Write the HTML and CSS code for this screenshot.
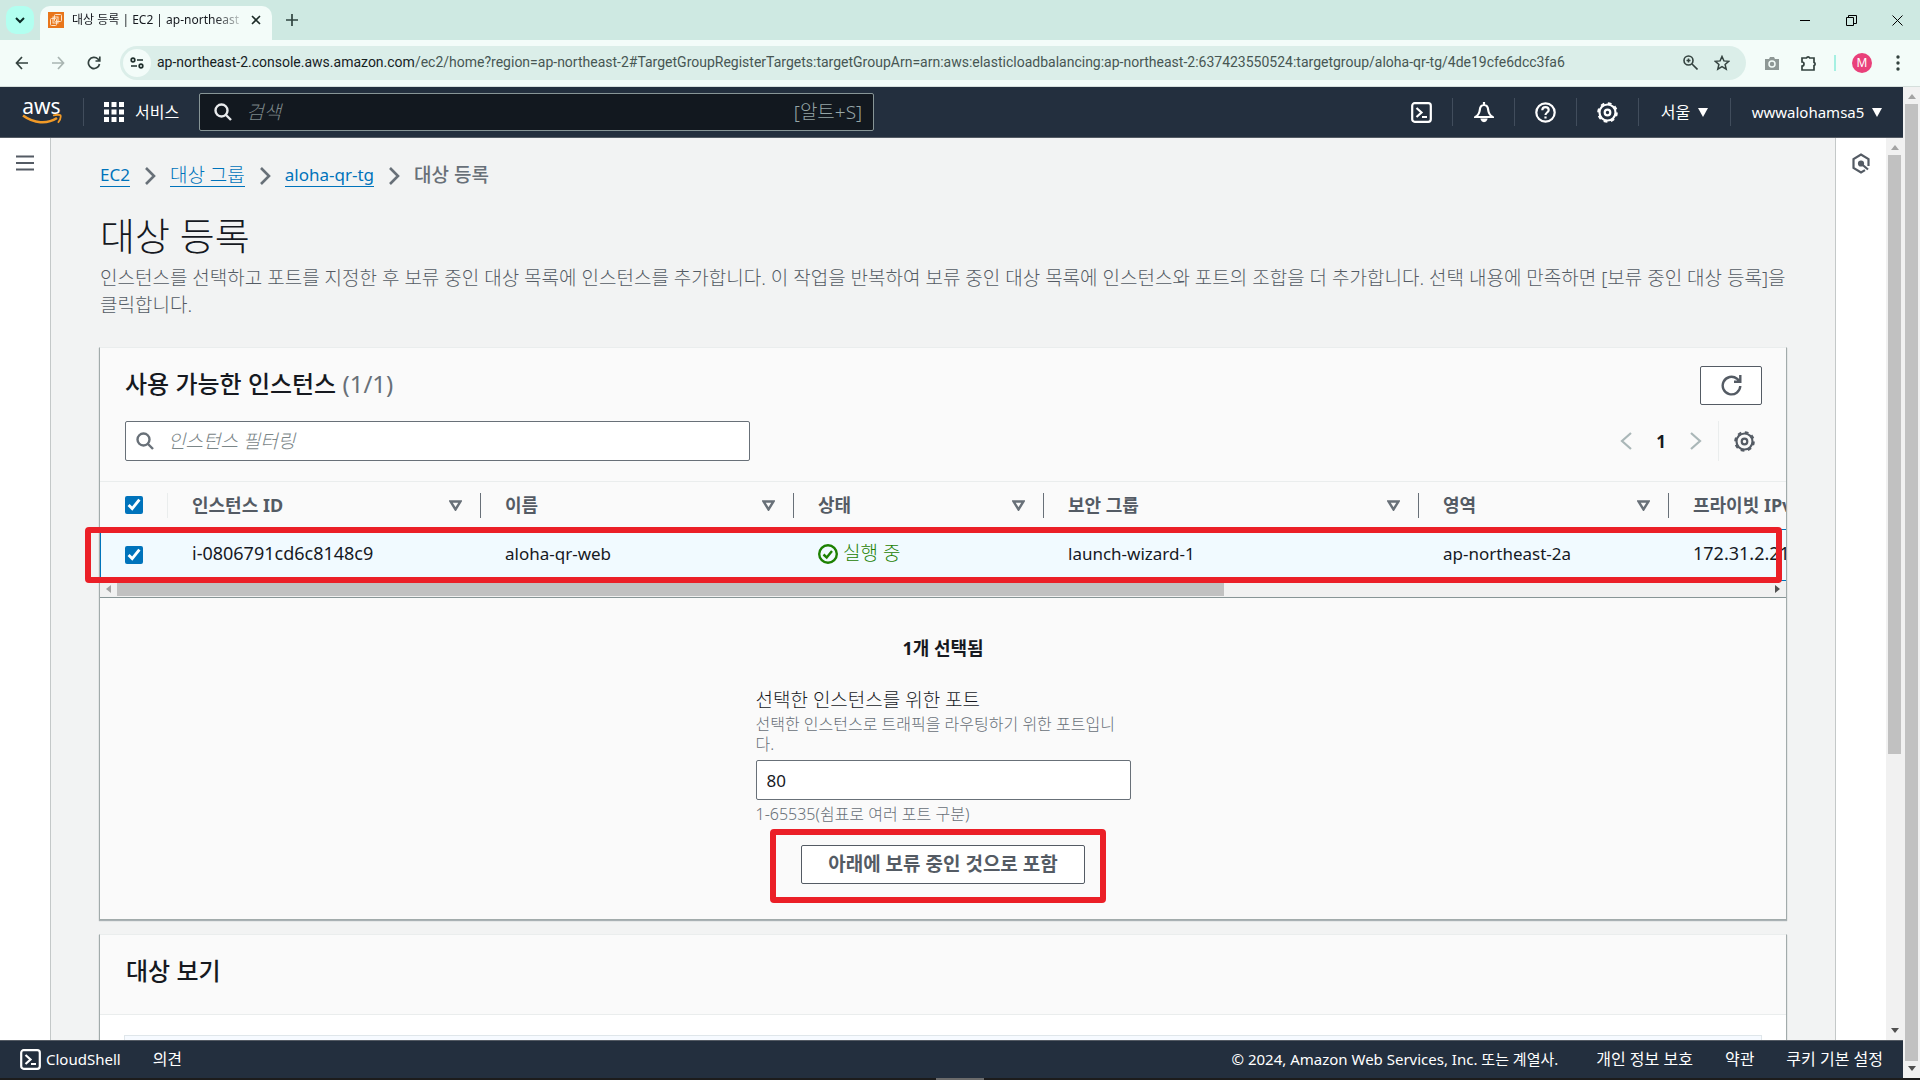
FILE: index.html
```html
<!DOCTYPE html>
<html lang="ko">
<head>
    <meta charset="UTF-8">
    <meta name="viewport" content="width=device-width, initial-scale=1.0">
    <title>대상 등록 | EC2 | ap-northeast-2</title>
    <link rel="stylesheet" href="styles.css">
</head>

<body>

    <!-- Browser -->
    <div class="tab-strip">
        <button class="tab-search" aria-label="탭 검색">
            <svg width="10" height="8" viewBox="0 0 10 8"><path d="M1 2l4 4 4-4" fill="none" stroke="#0b2b26" stroke-width="2"/></svg>
        </button>
        <div class="tab">
            <svg class="favicon" width="16" height="16" viewBox="0 0 16 16">
                <rect width="16" height="16" fill="#e8761b"/>
                <g fill="none" stroke="#fde3c8"><rect x="6.500" y="2.500" width="7" height="7" rx="1"/><rect x="2.500" y="6.500" width="6" height="7" rx="1"/><rect x="5" y="5" width="5" height="6"/></g>
            </svg>
            <span class="tab-title">대상 등록 | EC2 | ap-northeast</span>
            <button class="tab-close" aria-label="닫기">
                <svg width="10" height="10" viewBox="0 0 10 10"><path d="M1 1l8 8M9 1L1 9" stroke="#1c2b28" stroke-width="1.600"/></svg>
            </button>
        </div>
        <button class="new-tab" aria-label="새 탭">
            <svg width="12" height="12" viewBox="0 0 12 12"><path d="M6 0v12M0 6h12" stroke="#2f4440" stroke-width="1.700"/></svg>
        </button>
        <div class="window-buttons">
            <button aria-label="최소화"><svg width="10" height="10" viewBox="0 0 10 10"><path d="M0 5.500h10" stroke="#000"/></svg></button>
            <button aria-label="이전 크기로"><svg width="11" height="11" viewBox="0 0 11 11" fill="none" stroke="#000"><path d="M.5 2.500h7v8h-7zM2.500 2.500v-2h8v8h-3"/></svg></button>
            <button aria-label="창 닫기"><svg width="11" height="11" viewBox="0 0 11 11"><path d="M.5.5l10 10M10.500.5l-10 10" stroke="#000"/></svg></button>
        </div>
    </div>

    <div class="toolbar">
        <button aria-label="뒤로"><svg width="14" height="14" viewBox="0 0 14 14" fill="none" stroke="#33423f" stroke-width="1.700"><path d="M13 7H2M7 1L1.500 7 7 13"/></svg></button>
        <button aria-label="앞으로"><svg width="14" height="14" viewBox="0 0 14 14" fill="none" stroke="#a9b5b2" stroke-width="1.700"><path d="M1 7h11M7 1l5.500 6L7 13"/></svg></button>
        <button aria-label="새로고침"><svg width="14" height="14" viewBox="0 0 14 14" fill="none" stroke="#33423f" stroke-width="1.700"><path d="M12.500 8A5.600 5.600 0 1 1 11 3L12.500 5M12.800.5V5H8.500"/></svg></button>
        <div class="omnibox">
            <span class="site-info">
                <svg width="14" height="12" viewBox="0 0 14 12" fill="none" stroke="#1f2f2c" stroke-width="1.700"><circle cx="3" cy="3" r="1.800"/><path d="M7 3h6M1 9h6"/><circle cx="11" cy="9" r="1.800"/></svg>
            </span>
            <span class="url"><b>ap-northeast-2.console.aws.amazon.com</b>/ec2/home?region=ap-northeast-2#TargetGroupRegisterTargets:targetGroupArn=arn:aws:elasticloadbalancing:ap-northeast-2:637423550524:targetgroup/aloha-qr-tg/4de19cfe6dcc3fa6</span>
            <svg width="15" height="15" viewBox="0 0 15 15" fill="none" stroke="#33423f" stroke-width="1.600"><circle cx="5.500" cy="5.500" r="4.500"/><path d="M9 9l5.500 5.500M5.500 3.500v4M3.500 5.500h4"/></svg>
            <svg width="16" height="16" viewBox="0 0 16 16" fill="none" stroke="#33423f" stroke-width="1.500"><path d="M8 1.500l1.900 4.400 4.800.4-3.600 3.200 1.100 4.700L8 11.700l-4.200 2.500 1.100-4.700L1.300 6.300l4.800-.4z"/></svg>
        </div>
        <svg class="camera" width="16" height="14" viewBox="0 0 16 14"><path d="M1 3h4l1-2h4l1 2h4v11H1z" fill="#8e9896"/><circle cx="8" cy="8" r="3" fill="none" stroke="#f3fcf9" stroke-width="1.500"/></svg>
        <svg class="puzzle" width="18" height="18" viewBox="0 0 18 18"><path d="M2 4h4.500a1.700 1.700 0 0 1 3.200 0H14v4.400a1.700 1.700 0 0 1 0 3.200V16H2v-4a2 2 0 0 0 0-4z" fill="none" stroke="#33423f" stroke-width="1.700"/></svg>
        <span class="toolbar-line"></span>
        <span class="avatar">M</span>
        <svg class="dots" width="4" height="16" viewBox="0 0 4 16" fill="#33423f"><circle cx="2" cy="2" r="1.700"/><circle cx="2" cy="8" r="1.700"/><circle cx="2" cy="14" r="1.700"/></svg>
    </div>

    <div class="viewport">
        <div class="console">

            <header class="aws-header">
                <a class="logo" href="#" aria-label="aws">
                    <span>aws</span>
                    <svg width="40" height="11" viewBox="0 0 40 11" fill="none" stroke="#f19a27"><path d="M1 1.500c11 8 24 9 34 2.500" stroke-width="2.600"/><path d="M31 1.500c3-.8 6-1 7.500-.2.600 2-.5 5-2.500 7.500" stroke-width="1.800"/></svg>
                </a>
                <button class="services">
                    <svg width="20" height="20" viewBox="0 0 20 20" fill="#fff"><path d="M0 0h5v5H0zM7.500 0h5v5h-5zM15 0h5v5h-5zM0 7.500h5v5H0zM7.500 7.500h5v5h-5zM15 7.500h5v5h-5zM0 15h5v5H0zM7.500 15h5v5h-5zM15 15h5v5h-5z"/></svg>
                    서비스
                </button>
                <label class="global-search">
                    <svg width="18" height="18" viewBox="0 0 18 18" fill="none" stroke="#e9ebed" stroke-width="2.400"><circle cx="7.500" cy="7.500" r="6"/><path d="M11.500 11.500l5.500 5.500"/></svg>
                    <input type="text" placeholder="검색" aria-label="검색">
                    <span>[알트+S]</span>
                </label>
                <nav class="header-tools">
                    <button aria-label="CloudShell"><svg width="21" height="21" viewBox="0 0 21 21" fill="none" stroke="#fff" stroke-width="2.200"><rect x="1.200" y="1.200" width="18.600" height="18.600" rx="2.500"/><path d="M5.500 6l5 4.500-5 4.500M11 15h5"/></svg></button>
                    <button aria-label="알림"><svg width="20" height="21" viewBox="0 0 20 21" fill="none" stroke="#fff" stroke-width="2.200"><path d="M10 0v3M1.500 15c3-2 4-4 4.300-7C6 5 7.500 3 10 3s4 2 4.200 5c.3 3 1.300 5 4.300 7z"/><path d="M7.800 17.500a2.300 2.300 0 0 0 4.400 0z" fill="#fff"/></svg></button>
                    <button aria-label="도움말"><svg width="21" height="21" viewBox="0 0 21 21" fill="none" stroke="#fff" stroke-width="2.200"><circle cx="10.500" cy="10.500" r="9.200"/><path d="M7.300 8.300c0-4.300 6.400-4 6.400-.3 0 2.500-3.200 2.500-3.200 5M10.500 14.500v2"/></svg></button>
                    <button aria-label="설정"><svg width="21" height="21" viewBox="0 0 21 21" fill="none" stroke="#fff"><circle cx="10.500" cy="10.500" r="8" stroke-width="2.200"/><circle cx="10.500" cy="10.500" r="9.400" stroke-width="1.800" stroke-dasharray="3.700 3.700"/><circle cx="10.500" cy="10.500" r="2.800" stroke-width="2.200"/></svg></button>
                    <button class="region">서울 <svg width="10" height="9" viewBox="0 0 10 9"><path d="M0 0h10L5 9z" fill="#fff"/></svg></button>
                    <button class="account">wwwalohamsa5 <svg width="10" height="9" viewBox="0 0 10 9"><path d="M0 0h10L5 9z" fill="#fff"/></svg></button>
                </nav>
            </header>

            <div class="body">
                <aside class="side-panel">
                    <button aria-label="메뉴"><svg width="18" height="16" viewBox="0 0 18 16" stroke="#545b64" stroke-width="2.200"><path d="M0 1.500h18M0 8h18M0 14.500h18"/></svg></button>
                </aside>

                <main class="content">
                    <nav class="breadcrumb">
                        <a href="#">EC2</a>
                        <svg width="12" height="18" viewBox="0 0 12 18"><path d="M2 1l8 8-8 8" fill="none" stroke="#687078" stroke-width="2.600"/></svg>
                        <a class="ko" href="#">대상 그룹</a>
                        <svg width="12" height="18" viewBox="0 0 12 18"><path d="M2 1l8 8-8 8" fill="none" stroke="#687078" stroke-width="2.600"/></svg>
                        <a href="#">aloha-qr-tg</a>
                        <svg width="12" height="18" viewBox="0 0 12 18"><path d="M2 1l8 8-8 8" fill="none" stroke="#687078" stroke-width="2.600"/></svg>
                        <span class="ko">대상 등록</span>
                    </nav>
                    <h1>대상 등록</h1>
                    <p class="description">인스턴스를 선택하고 포트를 지정한 후 보류 중인 대상 목록에 인스턴스를 추가합니다. 이 작업을 반복하여 보류 중인 대상 목록에 인스턴스와 포트의 조합을 더 추가합니다. 선택 내용에 만족하면 [보류 중인 대상 등록]을 클릭합니다.</p>

                    <section class="card">
                        <div class="card-header">
                            <div class="card-row">
                                <h2>사용 가능한 인스턴스 <span>(1/1)</span></h2>
                                <button class="btn refresh" aria-label="새로 고침"><svg width="21" height="21" viewBox="0 0 21 21" fill="none" stroke="#545b64" stroke-width="2.400"><path d="M19.300 11A8.800 8.800 0 1 1 16 3.700L19 6.500M19.300 0v6.800H13"/></svg></button>
                            </div>
                            <div class="card-row">
                                <label class="filter">
                                    <svg width="18" height="18" viewBox="0 0 18 18" fill="none" stroke="#687078" stroke-width="2.400"><circle cx="7.500" cy="7.500" r="6"/><path d="M11.500 11.500l5.500 5.500"/></svg>
                                    <input type="text" placeholder="인스턴스 필터링" aria-label="인스턴스 필터링">
                                </label>
                                <div class="pagination">
                                    <button aria-label="이전 페이지"><svg width="12" height="18" viewBox="0 0 12 18"><path d="M11 1L2 9l9 8" fill="none" stroke="#aab7b8" stroke-width="2.200"/></svg></button>
                                    <b>1</b>
                                    <button aria-label="다음 페이지"><svg width="12" height="18" viewBox="0 0 12 18"><path d="M1 1l9 8-9 8" fill="none" stroke="#aab7b8" stroke-width="2.200"/></svg></button>
                                    <button class="preferences" aria-label="기본 설정"><svg width="21" height="21" viewBox="0 0 21 21" fill="none" stroke="#545b64"><circle cx="10.500" cy="10.500" r="8" stroke-width="2.200"/><circle cx="10.500" cy="10.500" r="9.400" stroke-width="1.800" stroke-dasharray="3.700 3.700"/><circle cx="10.500" cy="10.500" r="2.800" stroke-width="2.200"/></svg></button>
                                </div>
                            </div>
                        </div>

                        <div class="table-area">
                            <div class="table-scroll">
                                <table>
                                    <colgroup>
                                        <col class="col-check"><col class="col-id"><col class="col-id"><col class="col-short"><col class="col-group"><col class="col-short"><col class="col-short">
                                    </colgroup>
                                    <thead>
                                        <tr>
                                            <th><input type="checkbox" checked aria-label="모두 선택"></th>
                                            <th><div>인스턴스 ID <svg width="13" height="11" viewBox="0 0 13 11"><path d="M1.500 1.500h10l-5 8z" fill="none" stroke="#687078" stroke-width="2.400"/></svg></div></th>
                                            <th><div>이름 <svg width="13" height="11" viewBox="0 0 13 11"><path d="M1.500 1.500h10l-5 8z" fill="none" stroke="#687078" stroke-width="2.400"/></svg></div></th>
                                            <th><div>상태 <svg width="13" height="11" viewBox="0 0 13 11"><path d="M1.500 1.500h10l-5 8z" fill="none" stroke="#687078" stroke-width="2.400"/></svg></div></th>
                                            <th><div>보안 그룹 <svg width="13" height="11" viewBox="0 0 13 11"><path d="M1.500 1.500h10l-5 8z" fill="none" stroke="#687078" stroke-width="2.400"/></svg></div></th>
                                            <th><div>영역 <svg width="13" height="11" viewBox="0 0 13 11"><path d="M1.500 1.500h10l-5 8z" fill="none" stroke="#687078" stroke-width="2.400"/></svg></div></th>
                                            <th><div>프라이빗 IPv4</div></th>
                                        </tr>
                                    </thead>
                                    <tbody>
                                        <tr>
                                            <td><input type="checkbox" checked aria-label="i-0806791cd6c8148c9 선택"></td>
                                            <td class="num">i-0806791cd6c8148c9</td>
                                            <td>aloha-qr-web</td>
                                            <td><span class="running ko"><svg width="20" height="20" viewBox="0 0 20 20" fill="none" stroke="#1d8102" stroke-width="2.400"><circle cx="10" cy="10" r="8.800"/><path d="M5.500 10.500l3.200 3 5.300-6.500"/></svg>실행 중</span></td>
                                            <td>launch-wizard-1</td>
                                            <td>ap-northeast-2a</td>
                                            <td class="num">172.31.2.21</td>
                                        </tr>
                                    </tbody>
                                </table>
                            </div>
                            <div class="h-scroll">
                                <svg width="5" height="8" viewBox="0 0 5 8"><path d="M5 0v8L0 4z" fill="#a3a3a3"/></svg>
                                <div class="h-track"><div class="h-thumb"></div></div>
                                <svg width="5" height="8" viewBox="0 0 5 8"><path d="M0 0v8l5-4z" fill="#505050"/></svg>
                            </div>
                            <div class="mark mark-row"></div>
                        </div>

                        <div class="port-form">
                            <p class="selected">1개 선택됨</p>
                            <label for="port">선택한 인스턴스를 위한 포트</label>
                            <p class="hint">선택한 인스턴스로 트래픽을 라우팅하기 위한 포트입니다.</p>
                            <input type="text" id="port" value="80">
                            <p class="constraint">1-65535(쉼표로 여러 포트 구분)</p>
                            <div class="include">
                                <button class="btn">아래에 보류 중인 것으로 포함</button>
                                <div class="mark mark-button"></div>
                            </div>
                        </div>
                    </section>

                    <section class="card targets">
                        <div class="targets-header"><h2>대상 보기</h2></div>
                        <div class="targets-body"><div class="targets-box"></div></div>
                    </section>
                </main>

                <aside class="help-panel">
                    <button aria-label="도움말 패널"><svg width="20" height="21" viewBox="0 0 20 21" fill="none" stroke="#545b64" stroke-width="2.200"><path d="M17.500 13V6L10 1.500 2.500 6v9l7.500 4.500 4-2.400"/><circle cx="10" cy="10.500" r="2" fill="#545b64"/><path d="M10 10.500l7 6"/></svg></button>
                </aside>
                <div class="v-scroll">
                    <svg width="8" height="5" viewBox="0 0 8 5"><path d="M0 5h8L4 0z" fill="#a3a3a3"/></svg>
                    <div class="v-track"><div class="v-thumb inner"></div></div>
                    <svg width="8" height="5" viewBox="0 0 8 5"><path d="M0 0h8L4 5z" fill="#505050"/></svg>
                </div>
            </div>

            <footer class="aws-footer">
                <a class="cloudshell" href="#"><svg width="21" height="21" viewBox="0 0 21 21" fill="none" stroke="#fff" stroke-width="2.200"><rect x="1.200" y="1.200" width="18.600" height="18.600" rx="2.500"/><path d="M5.500 6l5 4.500-5 4.500M11 15h5"/></svg>CloudShell</a>
                <a href="#">의견</a>
                <span class="copyright">© 2024, Amazon Web Services, Inc. 또는 계열사.</span>
                <a href="#">개인 정보 보호</a>
                <a href="#">약관</a>
                <a href="#">쿠키 기본 설정</a>
            </footer>
        </div>

        <div class="v-scroll">
            <svg width="8" height="5" viewBox="0 0 8 5"><path d="M0 5h8L4 0z" fill="#a3a3a3"/></svg>
            <div class="v-track"><div class="v-thumb"></div></div>
            <svg width="8" height="5" viewBox="0 0 8 5"><path d="M0 0h8L4 5z" fill="#505050"/></svg>
        </div>
    </div>

    <div class="taskbar"><span></span></div>

</body>
</html>
```
FILE: styles.css
```css
* {
    box-sizing: border-box;
}
body {
    margin: 0;
    height: 100vh;
    display: flex;
    flex-direction: column;
    overflow: hidden;
    font-family: "Noto Sans", "Noto Sans CJK KR", sans-serif;
    font-size: 17px;
    line-height: 27px;
    color: #16191f;
    background-color: #f2f3f3;
}
h1, h2, p {
    margin: 0;
}
button, input {
    font: inherit;
    color: inherit;
}
button {
    display: flex;
    align-items: center;
    justify-content: center;
    padding: 0;
    border: none;
    background: none;
    cursor: pointer;
}
svg {
    flex: none;
    display: block;
}
.ko {
    font-size: 19px;
}

/* browser */
.tab-strip {
    flex: none;
    display: flex;
    align-items: center;
    height: 40px;
    padding-left: 6px;
    background-color: #cee9e2;
}
.tab-search {
    width: 28px;
    height: 28px;
    border-radius: 10px;
    background-color: #b2fff0;
}
.tab {
    align-self: flex-end;
    display: flex;
    align-items: center;
    width: 232px;
    height: 34px;
    margin-left: 6px;
    padding: 0 10px 6px 8px;
    border-radius: 10px 10px 0 0;
    background-color: #f3fcf9;
}
.tab-title {
    flex: 1;
    margin-left: 8px;
    white-space: nowrap;
    font-size: 12px;
    line-height: 20px;
    mask-image: linear-gradient(to right, #000 85%, rgba(0, 0, 0, 0.2));
}
.tab-close {
    width: 12px;
    margin-left: 10px;
}
.new-tab {
    width: 40px;
    height: 28px;
}
.window-buttons {
    display: flex;
    margin-left: auto;
}
.window-buttons button {
    width: 46px;
    height: 40px;
}
.toolbar {
    flex: none;
    display: flex;
    align-items: center;
    height: 47px;
    padding: 0 20px 1px 4px;
    background-color: #f3fcf9;
    border-bottom: 1px solid #d5dfdc;
}
.toolbar > button {
    width: 36px;
    height: 34px;
}
.omnibox {
    flex: 1;
    display: flex;
    align-items: center;
    gap: 16px;
    height: 34px;
    margin-left: 8px;
    padding: 0 16px 0 3px;
    border-radius: 17px;
    background-color: #dbeee9;
}
.site-info {
    display: flex;
    align-items: center;
    justify-content: center;
    width: 28px;
    height: 28px;
    border-radius: 14px;
    background-color: #f3fcf9;
}
.url {
    flex: 1;
    margin-left: -10px;
    overflow: hidden;
    white-space: nowrap;
    font-family: Roboto, "Noto Sans", sans-serif;
    font-size: 14px;
    color: #475653;
}
.url b {
    font-weight: normal;
    color: #16211f;
}
.camera {
    margin-left: 18px;
}
.puzzle {
    margin-left: 20px;
}
.toolbar-line {
    width: 2px;
    height: 16px;
    margin: 0 16px;
    background-color: #a5f0e2;
}
.avatar {
    width: 20px;
    height: 20px;
    border-radius: 10px;
    background-color: #e9407a;
    color: white;
    font-size: 12px;
    line-height: 20px;
    text-align: center;
}
.dots {
    margin-left: 24px;
}

/* console */
.viewport {
    flex: 1;
    display: flex;
    min-height: 0;
}
.console {
    flex: 1;
    display: flex;
    flex-direction: column;
    min-width: 0;
}
.aws-header {
    flex: none;
    display: flex;
    align-items: center;
    height: 51px;
    background-color: #232f3e;
    border-bottom: 1px solid #545b64;
    color: white;
    font-size: 15px;
}
.logo {
    display: flex;
    flex-direction: column;
    align-items: center;
    width: 84px;
    height: 28px;
    border-right: 1px solid #414d5c;
    color: white;
    font-size: 21px;
    line-height: 16px;
    text-decoration: none;
}
.services {
    gap: 11px;
    margin: 0 20px;
    font-size: 16px;
}
.global-search {
    display: flex;
    align-items: center;
    gap: 14px;
    width: 675px;
    height: 38px;
    padding: 0 11px 0 14px;
    border: 1px solid #879596;
    border-radius: 2px;
    background-color: #12181f;
    color: #95a5a6;
    font-size: 19px;
}
.global-search input, .filter input {
    flex: 1;
    min-width: 0;
    padding: 0;
    border: none;
    background: none;
    outline: none;
    font-size: 19px;
}
input::placeholder {
    font-style: italic;
    font-weight: 300;
    color: #7b8688;
}
.global-search span {
    font-size: 19px;
    font-weight: 300;
}
.header-tools {
    display: flex;
    align-items: center;
    margin-left: auto;
}
.header-tools button {
    width: 62px;
    height: 28px;
    gap: 8px;
    border-left: 1px solid #414d5c;
}
.header-tools button:first-child {
    border-left: none;
}
.header-tools .region {
    width: 92px;
    font-size: 16px;
}
.header-tools .account {
    width: 173px;
}
.body {
    flex: 1;
    display: flex;
    min-height: 0;
}
.side-panel, .help-panel {
    flex: none;
    width: 51px;
    padding: 15px 15px;
    background-color: white;
    border-right: 1px solid #c4c8c8;
}
.side-panel button, .help-panel button {
    width: 20px;
    height: 20px;
}
.help-panel {
    border-right: none;
    border-left: 1px solid #c4c8c8;
}
.content {
    flex: 1;
    min-width: 0;
    overflow: hidden;
    padding: 24px 48px 0;
}
.breadcrumb {
    display: flex;
    align-items: center;
    gap: 14px;
    padding-left: 1px;
    color: #687078;
}
.breadcrumb a {
    color: #0073bb;
    line-height: 22px;
    text-decoration: none;
    border-bottom: 1px solid #0073bb;
}
.breadcrumb a.ko {
    font-weight: 300;
}
.breadcrumb span {
    font-weight: 500;
}
h1 {
    margin-top: 24px;
    padding-left: 1px;
    font-size: 38px;
    line-height: 44px;
    font-weight: 300;
}
.description {
    margin-top: 8px;
    padding-left: 1px;
    color: #545b64;
    font-size: 19px;
    font-weight: 300;
}
.card {
    margin-top: 28px;
    border: 1px solid #a2abab;
    border-top-color: #eaeded;
    background-color: #fafafa;
    box-shadow: 0 1px 1px rgba(0, 28, 36, 0.3);
}
.card-header {
    display: flex;
    flex-direction: column;
    gap: 16px;
    padding: 18px 24px 20px 25px;
}
.card-row {
    display: flex;
    align-items: center;
    justify-content: space-between;
}
h2 {
    padding-bottom: 4px;
    font-size: 24px;
    line-height: 27px;
    font-weight: 500;
}
h2 span {
    color: #687078;
    font-weight: normal;
}
.btn {
    height: 39px;
    padding: 0 26px;
    border: 1px solid #545b64;
    border-radius: 2px;
    background-color: white;
    color: #545b64;
    font-size: 19px;
    font-weight: bold;
}
.refresh {
    width: 62px;
    padding: 0;
}
.filter {
    flex: 1;
    display: flex;
    align-items: center;
    gap: 14px;
    max-width: 625px;
    height: 40px;
    padding: 0 10px;
    border: 1px solid #687078;
    border-radius: 2px;
    background-color: white;
}
.pagination {
    display: flex;
    align-items: center;
    gap: 24px;
}
.pagination .preferences {
    width: 44px;
    height: 40px;
    margin-left: -8px;
    padding-left: 8px;
    border-left: 1px solid #eaeded;
}
.table-area {
    position: relative;
    border-top: 1px solid #eaeded;
    border-bottom: 1px solid #879596;
}
.table-scroll {
    overflow: hidden;
}
table {
    width: 1818px;
    table-layout: fixed;
    border-collapse: separate;
    border-spacing: 0;
}
.col-check {
    width: 67px;
}
.col-id {
    width: 313px;
}
.col-short {
    width: 250px;
}
.col-group {
    width: 375px;
}
th {
    height: 47px;
    padding: 0 0 1px;
    color: #545b64;
    text-align: left;
    font-size: 18px;
    font-weight: bold;
}
th div {
    display: flex;
    align-items: center;
    justify-content: space-between;
    height: 25px;
    padding: 0 18px 0 24px;
    border-left: 1px solid #687078;
}
th:nth-child(2) div {
    border-left-color: #eaeded;
}
td {
    height: 52px;
    padding: 0 0 3px 25px;
    background-color: #f1faff;
    border-top: 1px solid #0073bb;
    border-bottom: 1px solid #0073bb;
}
td:first-child {
    padding: 0;
    border-left: 1px solid #0073bb;
}
td.num {
    font-size: 18px;
}
input[type="checkbox"] {
    display: block;
    width: 18px;
    height: 18px;
    margin: 0 0 0 25px;
    accent-color: #0073bb;
}
td input[type="checkbox"] {
    margin-left: 24px;
}
.running {
    display: flex;
    align-items: center;
    gap: 5px;
    color: #1d8102;
    font-weight: 300;
}
.h-scroll {
    display: flex;
    align-items: center;
    justify-content: space-between;
    height: 16px;
    padding: 0 6px;
    background-color: #f1f1f1;
}
.h-track {
    flex: 1;
    height: 14px;
    margin: 0 6px;
}
.h-thumb {
    width: 67%;
    height: 14px;
    background-color: #c1c1c1;
}
/* red frames that lie over the row and the button */
.mark {
    position: absolute;
    border: 6px solid #eb1f27;
    border-radius: 4px;
    pointer-events: none;
}
.mark-row {
    top: 45px;
    left: -15px;
    right: 4px;
    height: 56px;
}
.mark-button {
    top: -16px;
    left: -31px;
    right: -21px;
    bottom: -19px;
}
.port-form {
    width: 375px;
    margin: 0 auto;
    padding: 37px 0 35px;
}
.selected {
    margin-bottom: 25px;
    font-size: 18px;
    font-weight: bold;
    text-align: center;
}
.port-form label {
    display: block;
    font-size: 19px;
    font-weight: 300;
}
.hint, .constraint {
    font-size: 16px;
    line-height: 20px;
    font-weight: 300;
    color: #687078;
}
.port-form input {
    display: block;
    width: 100%;
    height: 40px;
    margin: 6px 0 4px;
    padding: 0 10px;
    border: 1px solid #687078;
    border-radius: 2px;
    background-color: white;
}
.include {
    position: relative;
    width: fit-content;
    margin: 21px auto 0;
}
.targets {
    margin-top: 14px;
    background-color: white;
}
.targets-header {
    padding: 22px 26px 26px;
    background-color: #fafafa;
    border-bottom: 1px solid #eaeded;
}
.targets-body {
    padding: 20px 24px;
}
.targets-box {
    height: 60px;
    border: 1px solid #dfe6ea;
    background-color: #f6faff;
}
.v-scroll {
    flex: none;
    display: flex;
    flex-direction: column;
    align-items: center;
    width: 17px;
    padding: 7px 0;
    background-color: #f1f1f1;
}
.v-track {
    flex: 1;
    margin: 5px 0;
}
.v-thumb {
    width: 13px;
    height: 100%;
    background-color: #c1c1c1;
}
.v-thumb.inner {
    height: 69%;
}
.aws-footer {
    flex: none;
    display: flex;
    align-items: center;
    gap: 32px;
    height: 38px;
    padding: 0 20px;
    background-color: #232f3e;
    border-top: 1px solid #545b64;
    color: white;
    font-size: 15px;
}
.aws-footer a {
    color: white;
    font-size: 16px;
    text-decoration: none;
}
.aws-footer .cloudshell {
    display: flex;
    align-items: center;
    gap: 5px;
    font-size: 15px;
}
.copyright {
    margin-left: auto;
    margin-right: 6px;
}
.taskbar {
    flex: none;
    height: 2px;
    background-color: #1c1c1c;
}
.taskbar span {
    display: block;
    width: 48px;
    height: 2px;
    margin: 0 auto;
    background-color: #6b6b6b;
}
```
